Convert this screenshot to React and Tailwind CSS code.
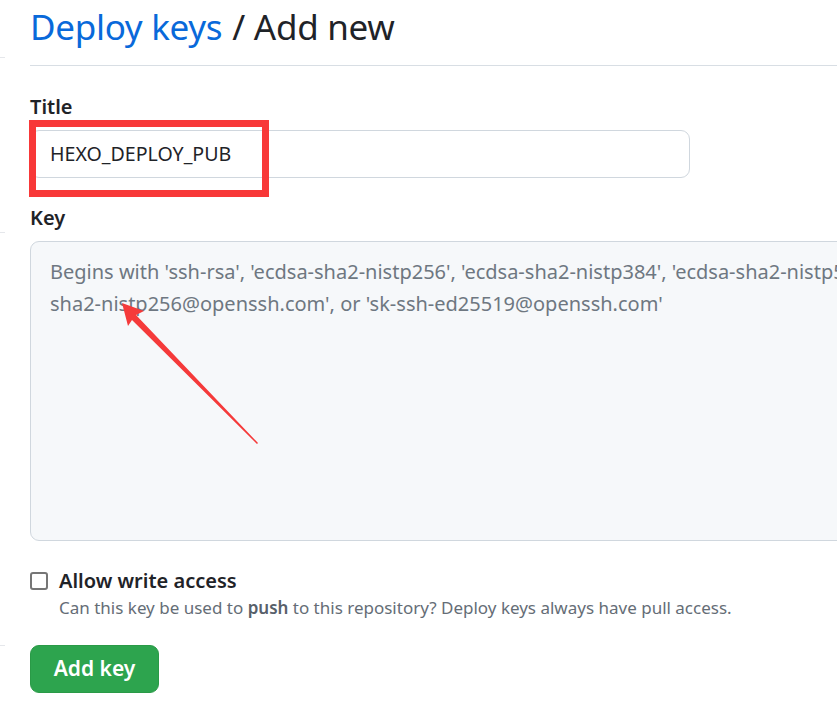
import React from "react";

function RedArrow() {
  // arrow pointing from lower right up to the placeholder text
  return (
    <svg
      className="pointer-events-none absolute left-[112px] top-[295px]"
      width="160"
      height="160"
      viewBox="0 0 160 160"
    >
      <polygon points="10,8 32,16 24,20 146,148 145,149 20,25 16,31" fill="#f53a3a" />
    </svg>
  );
}

export default function App() {
  return (
    <div
      className="relative h-[723px] w-[837px] overflow-hidden bg-white"
      style={{ fontFamily: '"Noto Sans", "Open Sans", sans-serif' }}
    >
      {/* faint marks at the left edge */}
      <div className="absolute left-0 top-[57px] h-px w-[5px] bg-[#e5e7eb]"></div>
      <div className="absolute left-0 top-[232px] h-px w-[5px] bg-[#e5e7eb]"></div>
      <div className="absolute left-0 top-[645px] h-px w-[5px] bg-[#e5e7eb]"></div>

      <div className="flex flex-col items-start pl-[30px]">
        {/* Header */}
        <div className="flex h-[66px] w-full items-center border-b border-[#d8dee4] pb-[12px] text-[35px] leading-none tracking-[-0.3px]">
          <span className="text-[#0969da]">Deploy keys</span>
          <span className="ml-[10px] text-[#1f2328]">/ Add new</span>
        </div>

        {/* Title */}
        <div className="mt-[29px] text-[20px] font-semibold leading-[24px] text-[#1f2328]">Title</div>
        <div className="mt-[11px] flex h-[48px] w-[660px] items-center rounded-[9px] border border-[#d0d7de] bg-white pl-[19px] text-[19.6px] text-[#1f2328]">
          HEXO_DEPLOY_PUB
        </div>

        {/* Key */}
        <div className="mt-[28px] text-[20px] font-semibold leading-[24px] text-[#1f2328]">Key</div>
        <div className="mt-[11px] h-[300px] w-[1100px] rounded-[9px] border border-[#d0d7de] bg-[#f6f8fa] pl-[19px] pt-[14px] text-[20px] leading-[32px] text-[#6e7781]">
          <div className="whitespace-nowrap">
            Begins with 'ssh-rsa', 'ecdsa-sha2-nistp256', 'ecdsa-sha2-nistp384', 'ecdsa-sha2-nistp521', 'ssh-ed25519', 'sk-ecdsa-
          </div>
          <div className="whitespace-nowrap">sha2-nistp256@openssh.com', or 'sk-ssh-ed25519@openssh.com'</div>
        </div>

        {/* Allow write access */}
        <div className="mt-[27px] flex gap-[11px]">
          <div className="mt-[4px] h-[18px] w-[18px] shrink-0 rounded-[3px] border-2 border-[#767676] bg-white"></div>
          <div>
            <div className="text-[20px] font-semibold leading-[26px] text-[#1f2328]">Allow write access</div>
            <div className="mt-[2px] text-[17px] leading-[24px] text-[#656d76]">
              Can this key be used to <b className="font-semibold text-[#57606a]">push</b> to this repository? Deploy keys always have pull access.
            </div>
          </div>
        </div>

        {/* Button */}
        <button className="mt-[25px] h-[48px] w-[129px] rounded-[9px] border border-[#2a9a47] bg-[#2da44e] text-[21px] font-semibold text-white">
          Add key
        </button>
      </div>

      {/* red highlight box around the title input */}
      <div className="pointer-events-none absolute left-[29px] top-[120px] h-[77px] w-[240px] border-[7px] border-[#f83838]"></div>

      <RedArrow />
    </div>
  );
}
